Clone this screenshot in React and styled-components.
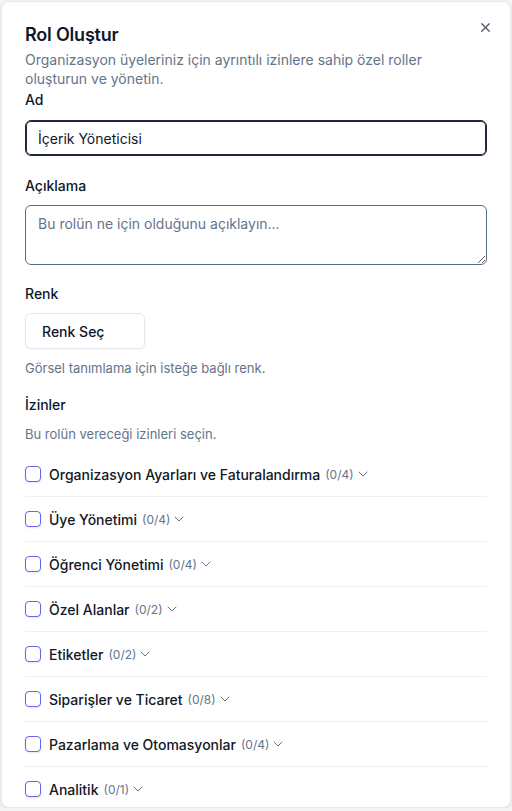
import React from 'react';
import styled, { createGlobalStyle } from 'styled-components';
import { X, ChevronDown } from 'lucide-react';

const GlobalStyle = createGlobalStyle`
  html, body {
    margin: 0;
    padding: 0;
    background: #f4f5f7;
  }
  body {
    font-family: Inter, "Noto Sans", sans-serif;
    color: #0f172a;
    -webkit-font-smoothing: antialiased;
  }
`;

const Dialog = styled.div`
  position: relative;
  box-sizing: border-box;
  margin: 1px 1px 0 1px;
  height: 807px;
  overflow: hidden;
  background: #ffffff;
  border: 1px solid #e6e8ec;
  border-radius: 8px;
  box-shadow: 0 2px 6px rgba(15, 23, 42, 0.08);
  padding: 24px 23px 24px 23px;
`;

const CloseButton = styled.button`
  position: absolute;
  top: 16px;
  right: 16px;
  width: 18px;
  height: 18px;
  padding: 0;
  border: none;
  background: none;
  color: #4b5563;
  display: flex;
  align-items: center;
  justify-content: center;
  cursor: pointer;
`;

const Header = styled.div`
  display: flex;
  flex-direction: column;
  gap: 6px;
`;

const Title = styled.h2`
  margin: 0;
  font-size: 18px;
  line-height: 18px;
  font-weight: 600;
  letter-spacing: -0.2px;
  color: #0f172a;
`;

const Description = styled.p`
  margin: 0;
  font-size: 14px;
  line-height: 19px;
  color: #64748b;
`;

const Form = styled.div`
  display: flex;
  flex-direction: column;
  gap: 20px;
  margin-top: 2px;
`;

const Field = styled.div`
  display: flex;
  flex-direction: column;
  gap: ${p => p.$gap || 9}px;
  margin-top: ${p => p.$shift || 0}px;
`;

const Label = styled.label`
  font-size: 14px;
  line-height: 20px;
  font-weight: 500;
  color: #0f172a;
`;

const Input = styled.input`
  box-sizing: border-box;
  width: 100%;
  height: 36px;
  padding: 0 12px;
  font-family: inherit;
  font-size: 14px;
  color: #0f172a;
  background: #fff;
  border: 1px solid #1e293b;
  box-shadow: inset 0 0 0 1px #1e293b;
  border-radius: 6px;
  outline: none;
`;

const TextArea = styled.textarea`
  box-sizing: border-box;
  width: 100%;
  height: 60px;
  padding: 8px 12px;
  font-family: inherit;
  font-size: 14px;
  line-height: 20px;
  color: #0f172a;
  background: #fff;
  border: 1px solid #5b6b82;
  border-radius: 6px;
  resize: vertical;
  outline: none;
  &::placeholder {
    color: #64748b;
  }
`;

const ColorButton = styled.button`
  box-sizing: border-box;
  width: 120px;
  height: 36px;
  padding: 0 16px;
  text-align: left;
  font-family: inherit;
  font-size: 14px;
  font-weight: 500;
  color: #0f172a;
  background: #fff;
  border: 1px solid #e2e8f0;
  border-radius: 6px;
  box-shadow: 0 1px 2px rgba(15, 23, 42, 0.04);
  cursor: pointer;
`;

const Hint = styled.p`
  margin: 0;
  font-size: 13px;
  line-height: 20px;
  color: #64748b;
`;

const PermissionList = styled.div`
  display: flex;
  flex-direction: column;
  margin-top: -12px;
`;

const PermissionRow = styled.div`
  display: flex;
  align-items: center;
  height: 44px;
  border-bottom: ${p => (p.$last ? 'none' : '1px solid #eceff3')};
`;

const Checkbox = styled.span`
  box-sizing: border-box;
  flex: none;
  width: 16px;
  height: 16px;
  border: 1.5px solid #6366f1;
  border-radius: 4px;
  background: #fff;
  box-shadow: 0 1px 2px rgba(79, 70, 229, 0.15);
  margin-right: 8px;
`;

const RowLabel = styled.span`
  font-size: 14px;
  font-weight: 500;
  color: #111827;
`;

const Count = styled.span`
  font-size: 12px;
  color: #64748b;
  margin-left: 5px;
  margin-right: 1px;
`;

const Chevron = styled(ChevronDown)`
  color: #64748b;
`;

const permissions = [
  { name: 'Organizasyon Ayarları ve Faturalandırma', count: '0/4' },
  { name: 'Üye Yönetimi', count: '0/4' },
  { name: 'Öğrenci Yönetimi', count: '0/4' },
  { name: 'Özel Alanlar', count: '0/2' },
  { name: 'Etiketler', count: '0/2' },
  { name: 'Siparişler ve Ticaret', count: '0/8' },
  { name: 'Pazarlama ve Otomasyonlar', count: '0/4' },
  { name: 'Analitik', count: '0/1' },
];

export default function App() {
  return (
    <>
      <GlobalStyle />
      <Dialog>
        <CloseButton aria-label="Kapat">
          <X size={15} strokeWidth={2} />
        </CloseButton>
        <Header>
          <Title>Rol Oluştur</Title>
          <Description>
            Organizasyon üyeleriniz için ayrıntılı izinlere sahip özel roller
            oluşturun ve yönetin.
          </Description>
        </Header>
        <Form>
          <Field $gap={10}>
            <Label>Ad</Label>
            <Input defaultValue="İçerik Yöneticisi" />
          </Field>
          <Field>
            <Label>Açıklama</Label>
            <TextArea placeholder="Bu rolün ne için olduğunu açıklayın..." />
          </Field>
          <Field $shift={-1}>
            <Label>Renk</Label>
            <ColorButton>Renk Seç</ColorButton>
            <Hint>Görsel tanımlama için isteğe bağlı renk.</Hint>
          </Field>
          <Field $shift={-3}>
            <Label>İzinler</Label>
            <Hint>Bu rolün vereceği izinleri seçin.</Hint>
          </Field>
          <PermissionList>
            {permissions.map((p, i) => (
              <PermissionRow key={p.name} $last={i === permissions.length - 1}>
                <Checkbox />
                <RowLabel>{p.name}</RowLabel>
                <Count>({p.count})</Count>
                <Chevron size={16} strokeWidth={1.5} />
              </PermissionRow>
            ))}
          </PermissionList>
        </Form>
      </Dialog>
    </>
  );
}
